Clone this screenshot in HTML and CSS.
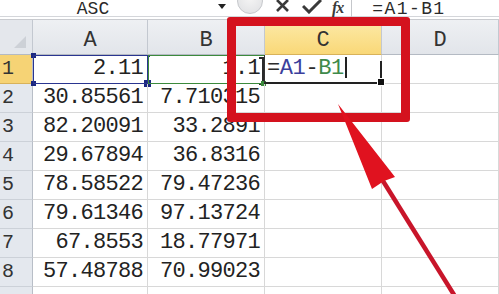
FILE: index.html
```html
<!DOCTYPE html>
<html>
<head>
<meta charset="utf-8">
<link rel="stylesheet" href="styles.css">
</head>
<body>
<div class="page">
  <div class="fbar">
    <div class="namebox">ASC</div>
    <div class="drop"></div>
    <div class="circle"></div>
    <svg class="ico-x" width="15" height="12" viewBox="0 0 15 12"><path d="M2 0 L13 11 M13 0 L2 11" stroke="#3a3a3a" stroke-width="2.6" fill="none"/></svg>
    <svg class="ico-ok" width="20" height="14" viewBox="0 0 20 14"><path d="M1 6 L7 12 L19 0" stroke="#3a3a3a" stroke-width="3" fill="none"/></svg>
    <div class="fx">fx</div>
    <div class="fsep"></div>
    <div class="ftext">=A1-B1</div>
  </div>
  <div class="sheet">
    <div class="hd corner"><span class="tri"></span></div>
    <div class="hd col">A</div>
    <div class="hd col">B</div>
    <div class="hd col sel">C</div>
    <div class="hd col">D</div>

    <div class="rh sel">1</div>
    <div class="c num refa">2.11<span class="mk m1"></span><span class="mk m2"></span><span class="mk m3"></span><span class="ibar"></span></div>
    <div class="c num refb">1.1<span class="gb"></span><span class="gsq"></span></div>
    <div class="c edit"><span class="eq">=</span><span class="ra">A1</span><span class="eq">-</span><span class="rb">B1</span><span class="caret"></span><span class="fh"></span></div>
    <div class="c"></div>

    <div class="rh">2</div><div class="c num">30.85561</div><div class="c num">7.710315</div><div class="c"></div><div class="c"></div>
    <div class="rh">3</div><div class="c num">82.20091</div><div class="c num">33.2891</div><div class="c"></div><div class="c"></div>
    <div class="rh">4</div><div class="c num">29.67894</div><div class="c num">36.8316</div><div class="c"></div><div class="c"></div>
    <div class="rh">5</div><div class="c num">78.58522</div><div class="c num">79.47236</div><div class="c"></div><div class="c"></div>
    <div class="rh">6</div><div class="c num">79.61346</div><div class="c num">97.13724</div><div class="c"></div><div class="c"></div>
    <div class="rh">7</div><div class="c num">67.8553</div><div class="c num">18.77971</div><div class="c"></div><div class="c"></div>
    <div class="rh">8</div><div class="c num">57.48788</div><div class="c num">70.99023</div><div class="c"></div><div class="c"></div>
    <div class="rh"></div><div class="c num"></div><div class="c num"></div><div class="c"></div><div class="c"></div>
  </div>
  <div class="redbox"></div>
  <svg class="arrow" width="499" height="294" viewBox="0 0 499 294">
    <line x1="383" y1="181" x2="456" y2="298" stroke="#c8152a" stroke-width="4.5"/>
    <polygon points="338,104 395,177 384,181 372,189" fill="#e0121f"/>
  </svg>
</div>
</body>
</html>
```
FILE: styles.css
```css
html, body {
  margin: 0;
  padding: 0;
  background: #ffffff;
}
.page {
  position: relative;
  width: 499px;
  height: 294px;
  overflow: hidden;
  font-family: "Liberation Mono", "DejaVu Sans Mono", monospace;
  color: #222;
}
.fbar {
  height: 20px;
  box-sizing: border-box;
  border-bottom: 1px solid #c9cbcf;
  box-shadow: inset 0 -2px 0 #ffffff, inset 0 -3px 0 #d4d6da;
  display: flex;
  align-items: flex-start;
  background: #fff;
}
.namebox {
  width: 186px;
  text-align: center;
  font-size: 18px;
  letter-spacing: 0;
  line-height: 18px;
  height: 18px;
  color: #2a2a2a;
}
.drop {
  margin-left: 32px;
  margin-top: 4px;
  width: 0;
  height: 0;
  border-left: 4.5px solid transparent;
  border-right: 4.5px solid transparent;
  border-top: 5px solid #222;
}
.circle {
  margin-left: 11px;
  margin-top: -12px;
  width: 24px;
  height: 24px;
  border-radius: 50%;
  border: 1px solid #c6c8cc;
  background: radial-gradient(circle at 50% 40%, #f4f4f4, #dedfe2);
  flex: none;
}
.ico-x {
  margin-left: 12px;
  flex: none;
}
.ico-ok {
  margin-left: 12px;
  flex: none;
}
.fx {
  margin-left: 10px;
  font-family: "Liberation Serif", serif;
  font-style: italic;
  font-weight: bold;
  font-size: 16px;
  line-height: 16px;
  color: #3a3a3a;
  letter-spacing: -1px;
}
.fsep {
  margin-left: 8px;
  width: 1px;
  height: 17px;
  background: #c5c7cb;
}
.ftext {
  margin-left: 20px;
  font-size: 18px;
  line-height: 18px;
  letter-spacing: 1.4px;
  color: #2a2a2a;
}
.sheet {
  display: grid;
  grid-template-columns: 33px 115px 117px 117px 117px;
  grid-template-rows: 35px repeat(9, 29px);
}
.hd {
  box-sizing: border-box;
  background: linear-gradient(#eef0f3, #e2e5ea);
  border-right: 1px solid #c3c8d0;
  border-bottom: 1px solid #b4bac3;
  display: flex;
  align-items: center;
  justify-content: center;
  font-size: 22px;
  color: #333;
  padding-top: 6px;
}
.hd.sel {
  background: linear-gradient(#fdeaa8, #f9d878);
  border-bottom-color: #d8b25a;
}
.corner {
  position: relative;
  background: #e4e7ec;
}
.tri {
  position: absolute;
  right: 6px;
  bottom: 6px;
  width: 0;
  height: 0;
  border-left: 12px solid transparent;
  border-bottom: 12px solid #cdd1d7;
}
.rh {
  box-sizing: border-box;
  background: #e4e8ee;
  border-right: 1px solid #b8bec7;
  border-bottom: 1px solid #ccd1d8;
  font-size: 20px;
  line-height: 28px;
  padding-left: 2px;
  color: #333;
}
.rh.sel {
  background: #f6d375;
  border-bottom-color: #d8b25a;
}
.c {
  box-sizing: border-box;
  border-right: 1px solid #d8d8d8;
  border-bottom: 1px solid #d8d8d8;
  font-size: 22px;
  letter-spacing: -0.7px;
  line-height: 28px;
  white-space: nowrap;
  position: relative;
}
.num {
  text-align: right;
  padding-right: 4px;
}
.refa::after {
  content: "";
  position: absolute;
  left: 0;
  top: 0;
  right: -1px;
  bottom: -1px;
  border: 1px solid #2a3590;
  pointer-events: none;
}
.mk {
  position: absolute;
  background: #1b2780;
  width: 5px;
  height: 5px;
}
.m1 { left: -2px; top: -2px; }
.m2 { left: -2px; bottom: -3px; }
.m3 { right: -4px; bottom: -4px; width: 7px; height: 7px; }
.ibar {
  position: absolute;
  right: -3px;
  top: 0;
  width: 3px;
  height: 26px;
  border-top: 2px solid #1b2780;
  border-bottom: 2px solid #1b2780;
  background: linear-gradient(90deg, transparent 1px, #1b2780 1px, #1b2780 2px, transparent 2px);
}
.refb::after {
  content: "";
  position: absolute;
  left: 0;
  top: 0;
  right: -1px;
  bottom: -1px;
  border: 1px solid #3c8a3c;
  pointer-events: none;
}
.gb {
  position: absolute;
  right: 0;
  top: 2px;
  width: 3px;
  height: 24px;
  border: 2px solid #2a2a2a;
  border-left: none;
}
.gsq {
  position: absolute;
  right: -2px;
  bottom: -3px;
  width: 5px;
  height: 5px;
  background: #3c8a3c;
}
.edit {
  padding-left: 2px;
  letter-spacing: -0.4px;
  border-left: 1px solid #333;
  border-bottom: 2px solid #222;
  margin-left: -1px;
}
.eq { color: #2b2b2b; }
.ra { color: #3b3f9c; }
.rb { color: #3f8a4a; }
.caret {
  position: absolute;
  left: 80px;
  top: 2px;
  width: 1.5px;
  height: 21px;
  background: #222;
}
.edit::after {
  content: "";
  position: absolute;
  right: -1px;
  top: 6px;
  width: 2px;
  height: 20px;
  background: #222;
}
.fh {
  position: absolute;
  right: -4px;
  bottom: -4px;
  width: 6px;
  height: 6px;
  background: #111;
  border: 1px solid #fff;
  z-index: 2;
}
.redbox {
  position: absolute;
  left: 227px;
  top: 17px;
  width: 183px;
  height: 105px;
  box-sizing: border-box;
  border: 9px solid #d4121e;
  border-radius: 3px;
  z-index: 5;
}
.arrow {
  position: absolute;
  left: 0;
  top: 0;
  z-index: 6;
}
```
